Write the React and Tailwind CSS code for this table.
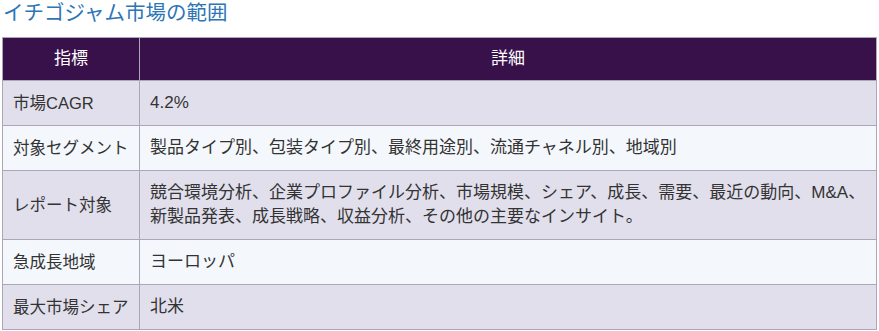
import React from 'react';

const rows = [
  { label: '市場CAGR', value: '4.2%' },
  { label: '対象セグメント', value: '製品タイプ別、包装タイプ別、最終用途別、流通チャネル別、地域別' },
  {
    label: 'レポート対象',
    value: (
      <>
        競合環境分析、企業プロファイル分析、市場規模、シェア、成長、需要、最近の動向、M&amp;A、
        <br />
        新製品発表、成長戦略、収益分析、その他の主要なインサイト。
      </>
    ),
  },
  { label: '急成長地域', value: 'ヨーロッパ' },
  { label: '最大市場シェア', value: '北米' },
];

export default function App() {
  return (
    <div
      className="bg-white w-[879px] h-[331px] px-[2px] text-[#333]"
      style={{ fontFamily: '"Liberation Sans", "Noto Sans CJK JP", sans-serif' }}
    >
      <h2 className="text-[20.5px] leading-[26px] text-[#2e75b6] pl-[1px] mb-[11px]">
        イチゴジャム市場の範囲
      </h2>
      <table className="w-[875px] table-fixed border-collapse text-[17px] leading-[24px]">
        <thead>
          <tr className="bg-[#38104a] text-white">
            <th className="w-[137px] border border-[#aaa7b9] px-[10px] py-[9px] font-normal text-center">指標</th>
            <th className="border border-[#aaa7b9] px-[10px] py-[9px] font-normal text-center">詳細</th>
          </tr>
        </thead>
        <tbody>
          {rows.map((row, i) => (
            <tr key={i} className={i % 2 === 0 ? 'bg-[#e1dfec]' : 'bg-[#f4f8fc]'}>
              <td className="border border-[#aaa7b9] pl-[10px] pr-[6px] py-[10px] whitespace-nowrap text-[16.5px]">{row.label}</td>
              <td className="border border-[#aaa7b9] px-[10px] py-[10px] whitespace-nowrap">{row.value}</td>
            </tr>
          ))}
        </tbody>
      </table>
    </div>
  );
}
